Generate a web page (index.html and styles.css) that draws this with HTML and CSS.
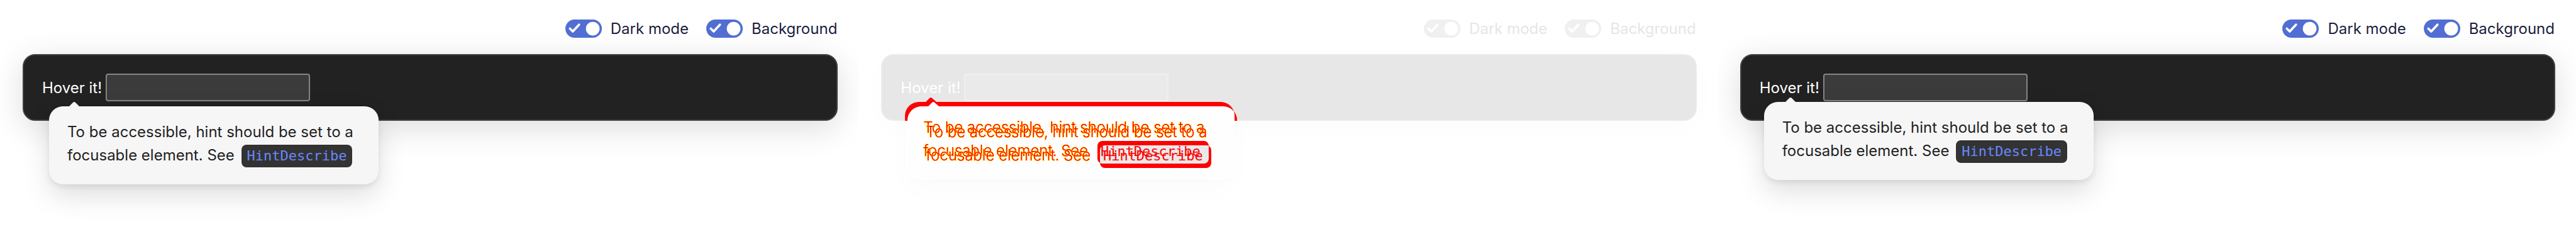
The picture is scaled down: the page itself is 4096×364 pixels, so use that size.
FILE: index.html
```html
<!DOCTYPE html>
<html lang="en">
<head>
<meta charset="utf-8">
<title>Hint</title>
<link rel="stylesheet" href="styles.css">
</head>
<body>
<main class="board">
  <section class="demo">
    <header class="options">
      <label class="option"><span class="switch"><input type="checkbox" checked><svg viewBox="0 0 64 32"><path d="M8 16l5 5 11-12"/><circle cx="48" cy="16" r="12"/></svg></span>Dark mode</label>
      <label class="option"><span class="switch"><input type="checkbox" checked><svg viewBox="0 0 64 32"><path d="M8 16l5 5 11-12"/><circle cx="48" cy="16" r="12"/></svg></span>Background</label>
    </header>
    <div class="panel">
      <label class="field">Hover it! <input type="text" class="box"></label>
      <div class="hint hint-low" role="tooltip">
        <svg class="arrow" viewBox="0 0 18 8"><path d="M0 8L7 1q2-2 4 0l7 7z"/></svg>
        To be accessible, hint should be set to a focusable element. See <code>HintDescribe</code>
      </div>
    </div>
  </section>

  <section class="demo demo-diff">
    <header class="options">
      <label class="option"><span class="switch"><input type="checkbox" checked><svg viewBox="0 0 64 32"><path d="M8 16l5 5 11-12"/><circle cx="48" cy="16" r="12"/></svg></span>Dark mode</label>
      <label class="option"><span class="switch"><input type="checkbox" checked><svg viewBox="0 0 64 32"><path d="M8 16l5 5 11-12"/><circle cx="48" cy="16" r="12"/></svg></span>Background</label>
    </header>
    <div class="panel">
      <label class="field">Hover it! <input type="text" class="box"></label>
      <div class="hint hint-high hint-diff" role="tooltip">
        <svg class="changes" viewBox="0 -8 530 140">
          <defs>
            <path id="shape" d="M22 0H33L39-6q2-2 4 0l7 6H502a22 22 0 0 1 22 22V102a22 22 0 0 1-22 22H22a22 22 0 0 1-22-22V22A22 22 0 0 1 22 0z"/>
            <clipPath id="above"><rect x="-2" y="-10" width="540" height="40"/></clipPath>
            <clipPath id="high"><use href="#shape"/></clipPath>
            <clipPath id="tag"><rect x="306" y="62" width="177" height="36" rx="8"/></clipPath>
          </defs>
          <g clip-path="url(#above)">
            <use href="#shape" class="changed"/>
            <use href="#shape" x="4" y="7" class="changed"/>
          </g>
          <g clip-path="url(#high)"><use href="#shape" x="4" y="7" class="same"/></g>
          <rect x="306" y="62" width="177" height="36" rx="8" class="changed"/>
          <rect x="310" y="69" width="177" height="36" rx="8" class="changed"/>
          <g clip-path="url(#tag)"><rect x="310" y="69" width="177" height="36" rx="8" class="same-tag"/></g>
        </svg>
        <div class="words">To be accessible, hint should be set to a focusable element. See <code>HintDescribe</code></div>
        <div class="words words-low" aria-hidden="true">To be accessible, hint should be set to a focusable element. See <code>HintDescribe</code></div>
      </div>
    </div>
  </section>

  <section class="demo">
    <header class="options">
      <label class="option"><span class="switch"><input type="checkbox" checked><svg viewBox="0 0 64 32"><path d="M8 16l5 5 11-12"/><circle cx="48" cy="16" r="12"/></svg></span>Dark mode</label>
      <label class="option"><span class="switch"><input type="checkbox" checked><svg viewBox="0 0 64 32"><path d="M8 16l5 5 11-12"/><circle cx="48" cy="16" r="12"/></svg></span>Background</label>
    </header>
    <div class="panel">
      <label class="field">Hover it! <input type="text" class="box"></label>
      <div class="hint hint-high" role="tooltip">
        <svg class="arrow" viewBox="0 0 18 8"><path d="M0 8L7 1q2-2 4 0l7 7z"/></svg>
        To be accessible, hint should be set to a focusable element. See <code>HintDescribe</code>
      </div>
    </div>
  </section>
</main>
</body>
</html>
```
FILE: styles.css
```css
* { box-sizing: border-box; }

body {
  margin: 0;
  background: #fff;
  color: #1b1e3f;
  font: 24px/29px Inter, "Liberation Sans", sans-serif;
}

.board {
  display: grid;
  grid-template-columns: repeat(3, 1fr);
  min-height: 100vh;
}

.demo {
  padding: 31px 33px 31px 36px;
  overflow: hidden;
}

.options {
  display: flex;
  justify-content: flex-end;
  gap: 28px;
  padding-right: 1px;
  margin-bottom: 26px;
  position: relative;
  z-index: 1;
}

.option {
  display: flex;
  align-items: center;
  gap: 14px;
}

.switch {
  position: relative;
  width: 58px;
  height: 29px;
}

.switch input {
  appearance: none;
  display: block;
  width: 100%;
  height: 100%;
  margin: 0;
  border-radius: 15px;
  background: #526ed3;
}

.switch svg {
  position: absolute;
  inset: 0;
  width: 100%;
  height: 100%;
  pointer-events: none;
  fill: #fff;
}

.switch path {
  fill: none;
  stroke: #fff;
  stroke-width: 4;
  stroke-linecap: round;
  stroke-linejoin: round;
}

.panel {
  position: relative;
  padding: 29px;
  border: 2px solid #414141;
  border-radius: 20px;
  background: #222;
  color: #fff;
  box-shadow: 0 11px 51px rgba(0, 0, 0, 0.14);
}

.field {
  display: flex;
  align-items: center;
  gap: 6px;
}

.box {
  width: 325px;
  height: 44px;
  border: 2px solid #858585;
  border-radius: 4px;
  background: #3b3b3b;
  color: inherit;
  font: inherit;
}

.hint {
  position: absolute;
  width: 524px;
  padding: 22px 28px 28px 29px;
  border-radius: 22px;
  background: #f6f6f6;
  color: #222;
  line-height: 37px;
  box-shadow: 0 18px 44px rgba(0, 0, 0, 0.13), 0 4px 8px rgba(0, 0, 0, 0.08);
}

.hint-low { top: 81px; left: 40px; }
.hint-high { top: 74px; left: 36px; }

.arrow {
  position: absolute;
  top: -7px;
  left: 31px;
  width: 18px;
  height: 8px;
  fill: #f6f6f6;
}

.hint-high .arrow { left: 33px; }

code {
  margin-left: 4px;
  padding: 5px 9px 6px;
  border-radius: 8px;
  background: #333;
  box-shadow: 0 0 0 1px #fff;
  color: #6788ff;
  font: 22px/26px "DejaVu Sans Mono", monospace;
}

.demo-diff { color: #e6e6e6; }
.demo-diff .switch input { background: #f0f0f0; }

.demo-diff .panel {
  border-color: #ebebeb;
  background: #e7e7e7;
  box-shadow: 0 11px 51px rgba(0, 0, 0, 0.015);
}

.demo-diff .box {
  border-color: #f0f0f0;
  background: #eaeaea;
}

.hint-diff {
  background: none;
  color: #f00;
  box-shadow: 0 18px 44px rgba(0, 0, 0, 0.015), 0 4px 8px rgba(0, 0, 0, 0.01);
  padding: 0;
}

.changes {
  position: absolute;
  top: -8px;
  left: 0;
  width: 530px;
  height: 140px;
}

.changed { fill: #f00; }
.same { fill: #fefefe; }
.same-tag { fill: #e9e9e9; }

.words {
  position: relative;
  padding: 22px 28px 28px 29px;
  font-weight: 300;
  -webkit-text-stroke: 1px #ff0;
  paint-order: stroke fill;
}

.words-low {
  position: absolute;
  top: 7px;
  left: 4px;
  width: 100%;
}

.words code {
  background: none;
  box-shadow: none;
  color: #f00;
  -webkit-text-stroke: 0;
}
```
